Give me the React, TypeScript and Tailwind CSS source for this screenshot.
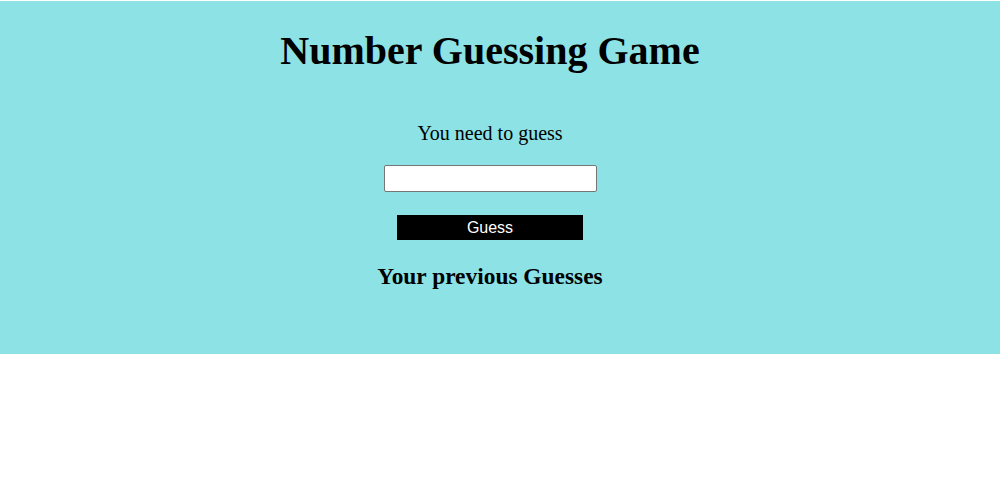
import { useState } from "react";

export default function App() {
  const [guess, setGuess] = useState("");
  const [guesses, setGuesses] = useState<string[]>([]);

  const submit = () => {
    if (!guess.trim()) return;
    setGuesses((g) => [...g, guess.trim()]);
    setGuess("");
  };

  return (
    <div className="min-h-[499px] bg-white font-['Liberation_Serif',serif] text-black">
      <section className="mt-px bg-[#8ce2e4] pb-[64px]">
        <div className="mr-[20px] flex flex-col items-center">
          <h1 className="mt-[27px] text-[40px] font-bold leading-[46px]">Number Guessing Game</h1>
          <p className="mt-[48px] text-[20px] leading-[23px]">You need to guess</p>
          <input
            type="text"
            value={guess}
            onChange={(e) => setGuess(e.target.value)}
            className="mt-[20px] h-[27px] w-[213px] rounded-[2px] border border-[#767676] bg-white px-1 text-[16px] outline-none"
          />
          <button
            type="button"
            onClick={submit}
            className="mt-[23px] h-[25px] w-[186px] bg-black font-['Liberation_Sans',sans-serif] text-[16px] leading-[25px] text-white"
          >
            Guess
          </button>
          <h3 className="mt-[23px] text-[23.4px] font-bold leading-[27px]">Your previous Guesses</h3>
          {guesses.length > 0 && (
            <p className="mt-2 text-[20px] leading-[23px]">{guesses.join(", ")}</p>
          )}
        </div>
      </section>
    </div>
  );
}
